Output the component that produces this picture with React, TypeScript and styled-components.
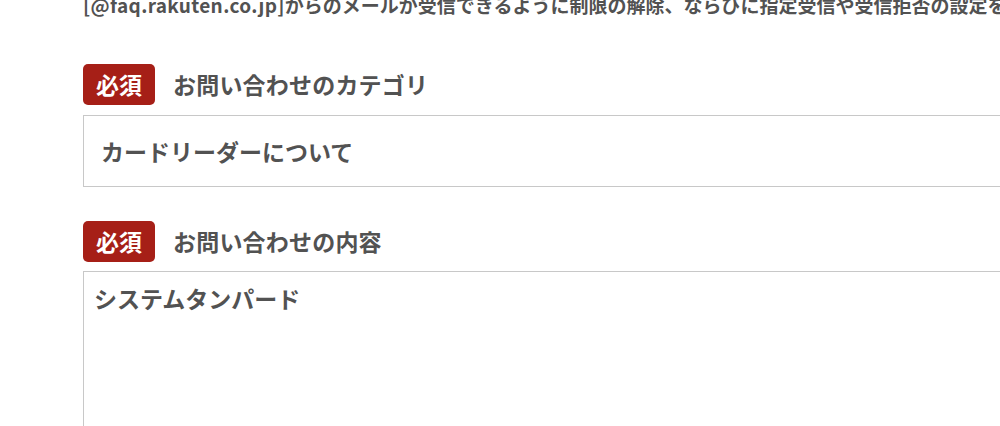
import React from 'react';
import styled, { createGlobalStyle } from 'styled-components';

const GlobalStyle = createGlobalStyle`
  html, body {
    margin: 0;
    padding: 0;
    background: #fff;
  }
  body {
    font-family: 'Noto Sans CJK JP', 'Noto Sans', sans-serif;
    color: #525252;
  }
`;

const Page = styled.div`
  width: 1000px;
  height: 426px;
  overflow: hidden;
  padding-left: 83px;
  box-sizing: border-box;
`;

const Notice = styled.p`
  margin: -5px 0 50px;
  font-size: 19px;
  line-height: 19px;
  font-weight: 700;
  white-space: nowrap;
`;

const Domain = styled.span`
  letter-spacing: 0.35px;
`;

const Field = styled.section`
  & + & {
    margin-top: 34px;
  }
`;

const LabelRow = styled.div`
  display: flex;
  align-items: center;
  gap: 18px;
`;

const RequiredBadge = styled.span`
  display: inline-flex;
  align-items: center;
  justify-content: center;
  width: 72px;
  height: 41px;
  border-radius: 5px;
  background: #a61f17;
  color: #fff;
  font-size: 23px;
  font-weight: 700;
  line-height: 1;
`;

const LabelText = styled.span`
  font-size: 23px;
  font-weight: 700;
  line-height: 1;
  letter-spacing: 0.2px;
`;

const SelectBox = styled.div`
  margin-top: 10px;
  width: 1000px;
  height: 72px;
  box-sizing: border-box;
  border: 1px solid #c8c8c8;
  padding: 0 17px;
  display: flex;
  align-items: center;
  font-size: 23px;
  font-weight: 700;
`;

const TextArea = styled.textarea`
  display: block;
  margin-top: 9px;
  width: 1000px;
  height: 220px;
  box-sizing: border-box;
  border: 1px solid #c8c8c8;
  border-radius: 0;
  padding: 9px 10px;
  font-family: inherit;
  font-size: 23px;
  font-weight: 700;
  line-height: 1.5;
  color: #525252;
  resize: none;
  outline: none;
`;

export default function App() {
  return (
    <>
      <GlobalStyle />
      <Page>
        <Notice>
          <Domain>[@faq.rakuten.co.jp]</Domain>
          からのメールが受信できるように制限の解除、ならびに指定受信や受信拒否の設定を行ってください。
        </Notice>

        <Field>
          <LabelRow>
            <RequiredBadge>必須</RequiredBadge>
            <LabelText>お問い合わせのカテゴリ</LabelText>
          </LabelRow>
          <SelectBox>カードリーダーについて</SelectBox>
        </Field>

        <Field>
          <LabelRow>
            <RequiredBadge>必須</RequiredBadge>
            <LabelText>お問い合わせの内容</LabelText>
          </LabelRow>
          <TextArea readOnly defaultValue="システムタンパード" />
        </Field>
      </Page>
    </>
  );
}
